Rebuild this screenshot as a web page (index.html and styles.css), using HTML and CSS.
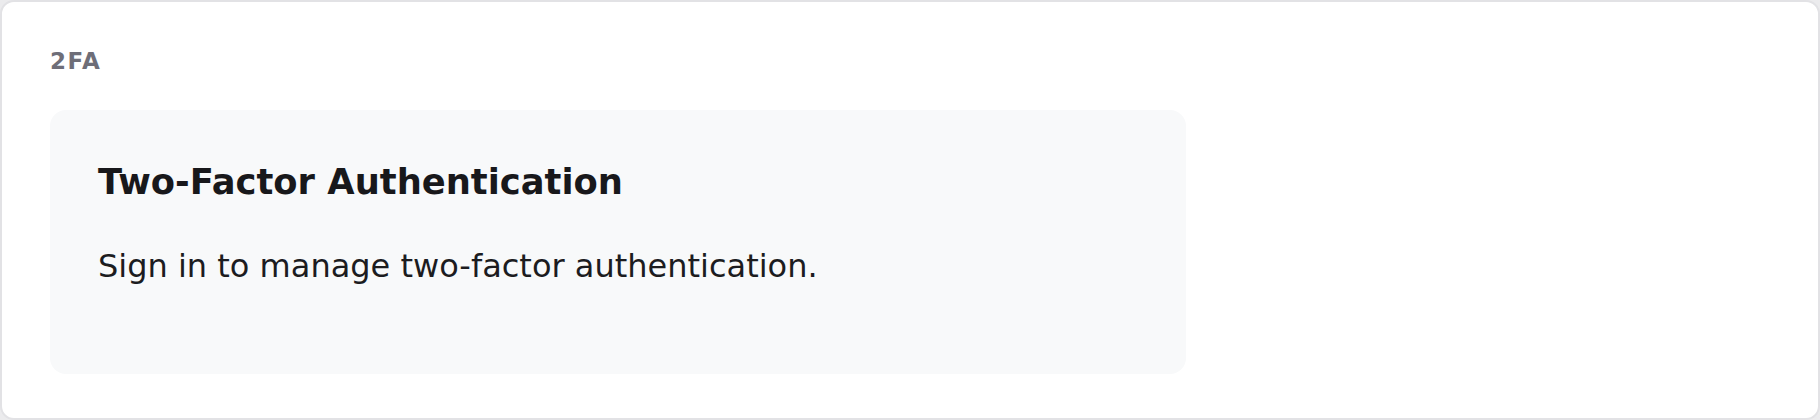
FILE: index.html
```html
<!DOCTYPE html>
<html lang="en">
<head>
    <meta charset="UTF-8">
    <meta name="viewport" content="width=device-width, initial-scale=1.0">
    <title>2FA</title>
    <link rel="stylesheet" href="styles.css">
</head>
<body>
    <div class="panel">
        <div class="panel-label">2FA</div>

        <div class="auth-card">
            <h2 class="auth-title">Two-Factor Authentication</h2>
            <p class="auth-text">Sign in to manage two-factor authentication.</p>
        </div>
    </div>
</body>
</html>
```

FILE: styles.css
```css
* {
    margin: 0;
    padding: 0;
    box-sizing: border-box;
}

html, body {
    height: 100%;
}

body {
    font-family: 'DejaVu Sans', 'Noto Sans', sans-serif;
    background: #ebebed;
    color: #18181b;
}

.panel {
    height: 100%;
    background: #ffffff;
    border: 2px solid #e2e2e5;
    border-radius: 14px;
    padding: 46px 48px;
}

.panel-label {
    font-size: 23px;
    line-height: 26px;
    font-weight: bold;
    letter-spacing: 1.5px;
    color: #6e6e78;
    margin-bottom: 36px;
}

.auth-card {
    width: 1136px;
    background: #f8f9fa;
    border-radius: 16px;
    padding: 51px 48px 89px;
}

.auth-title {
    font-size: 35.3px;
    line-height: 41px;
    font-weight: bold;
    color: #18181b;
    margin-bottom: 46px;
}

.auth-text {
    font-size: 32px;
    line-height: 37px;
    color: #1c1c1f;
}
```
